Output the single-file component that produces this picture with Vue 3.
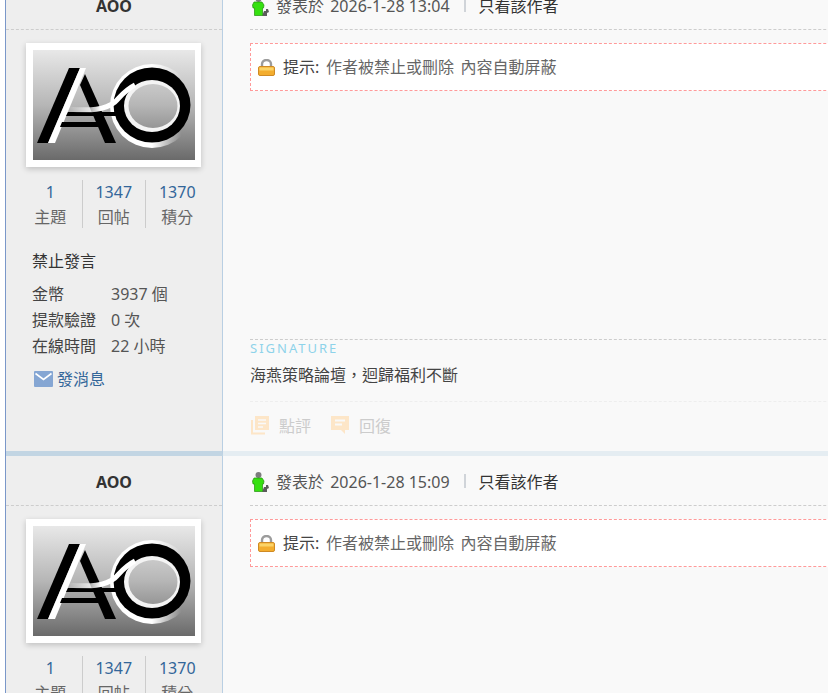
<script setup>
const posts = [
  { time: '2026-1-28 13:04', full: true },
  { time: '2026-1-28 15:09', full: false },
]
const stats = [
  { value: '1', label: '主題' },
  { value: '1347', label: '回帖' },
  { value: '1370', label: '積分' },
]
const details = [
  { label: '金幣', value: '3937 個' },
  { label: '提款驗證', value: '0 次' },
  { label: '在線時間', value: '22 小時' },
]
</script>

<template>
  <div class="page">
    <div class="thread">
      <article v-for="(post, i) in posts" :key="i" class="post">
        <aside class="side">
          <div class="author">AOO</div>
          <div class="avatar">
            <svg class="logo" width="162" height="110" viewBox="0 0 162 110">
              <defs>
                <linearGradient :id="'bg' + i" gradientUnits="userSpaceOnUse" x1="0" y1="0" x2="0" y2="110">
                  <stop offset="0" stop-color="#e8e8e8" />
                  <stop offset="0.5" stop-color="#b6b6b6" />
                  <stop offset="1" stop-color="#6a6a6a" />
                </linearGradient>
                <linearGradient :id="'halo' + i" x1="0" y1="0" x2="1" y2="0">
                  <stop offset="0" stop-color="#fff" />
                  <stop offset="0.5" stop-color="#fff" />
                  <stop offset="0.85" stop-color="#fff" stop-opacity="0" />
                </linearGradient>
                <linearGradient :id="'swoosh' + i" gradientUnits="userSpaceOnUse" x1="34" y1="0" x2="68" y2="0">
                  <stop offset="0" stop-color="#fff" stop-opacity="0" />
                  <stop offset="1" stop-color="#fff" />
                </linearGradient>
              </defs>
              <rect width="162" height="110" :fill="'url(#bg' + i + ')'" />
              <ellipse cx="119" cy="56" rx="42" ry="42" :fill="'url(#halo' + i + ')'" />
              <ellipse cx="119" cy="55" rx="38.500" ry="37.500" fill="#000" />
              <ellipse cx="119" cy="56" rx="28" ry="26" fill="#f4f4f4" />
              <ellipse cx="120" cy="56" rx="24.500" ry="22" :fill="'url(#bg' + i + ')'" />
              <path d="M4 93 L36 18 L47 18 L15 93 Z" fill="#000" />
              <path d="M15 93 L47 18 L53 18 L22 93 Z" fill="#fff" />
              <path d="M52 24 L83 93 L72 93 L47 35 Z" fill="#000" />
              <path d="M35 62 L88 62 L88 66 L33 66 Z" fill="#000" />
              <path d="M29 72 L70 72 L74 77 L27 77 Z" fill="#000" />
              <path d="M34 59 C58 61 72 60 82 52 C88 46 92 40 102 35" fill="none" :stroke="'url(#swoosh' + i + ')'" stroke-width="5" />
            </svg>
          </div>
          <div class="stats">
            <div v-for="s in stats" :key="s.label" class="stat">
              <span class="stat-value">{{ s.value }}</span>
              <span class="stat-label">{{ s.label }}</span>
            </div>
          </div>
          <div class="group">禁止發言</div>
          <dl class="details">
            <div v-for="d in details" :key="d.label" class="detail">
              <dt>{{ d.label }}</dt>
              <dd>{{ d.value }}</dd>
            </div>
          </dl>
          <div class="message">
            <svg width="19" height="16" viewBox="0 0 19 16">
              <rect width="19" height="16" rx="1" fill="#85a6d3" />
              <path d="M1.500 2.500 L9.500 8.500 L17.500 2.500" fill="none" stroke="#fff" stroke-width="1.600" />
            </svg>
            <span>發消息</span>
          </div>
        </aside>

        <section class="main">
          <header class="meta">
            <svg class="online" width="17" height="21" viewBox="0 0 17 21">
              <path d="M10 20 L12 15 L14 15 L14 13 L16 13 L17 16 L15 17 L15 20 Z" fill="#5c5c5c" />
              <circle cx="6.500" cy="3" r="3" fill="#7d7d7d" />
              <path d="M2 6 H10 L12 9 L11.500 12 L10.500 12 L10.500 19.500 H2.500 L2.500 12 L1 12 L0.500 9 Z" fill="#35e010" stroke="#23900c" stroke-width="0.700" />
            </svg>
            <span class="time"><span class="posted">發表於</span> {{ post.time }}</span>
            <i class="pipe"></i>
            <span class="only">只看該作者</span>
          </header>
          <div class="notice">
            <svg width="17" height="17" viewBox="0 0 17 17">
              <path d="M4 8 V5 a4.500 4 0 0 1 9 0 V8" fill="none" stroke="#9c9c9c" stroke-width="2.400" />
              <rect x="0.500" y="7.500" width="16" height="9" rx="1.500" fill="#f3ad2e" stroke="#cf8a24" />
              <rect x="1.500" y="8.500" width="14" height="3" fill="#fbd468" />
            </svg>
            <span class="notice-text"><b>提示:</b> 作者被禁止或刪除 內容自動屏蔽</span>
          </div>
          <template v-if="post.full">
            <div class="signature">
              <div class="sig-title">SIGNATURE</div>
              <div class="sig-text">海燕策略論壇，迴歸福利不斷</div>
            </div>
            <footer class="actions">
              <span class="action">
                <svg width="20" height="20" viewBox="0 0 20 20">
                  <path d="M5 1 H19 V15 H5 Z" fill="#fde6c8" />
                  <path d="M8 5 H16 M8 8.500 H16 M8 12 H13" fill="none" stroke="#f9f9f9" stroke-width="1.600" />
                  <path d="M2 5 V18.500 H15" fill="none" stroke="#fde6c8" stroke-width="2" />
                </svg>
                點評
              </span>
              <span class="action">
                <svg width="20" height="20" viewBox="0 0 20 20">
                  <path d="M1 1 H19 V15 H15 V19 L11 15 H1 Z" fill="#fde6c8" />
                  <path d="M5 5.500 H15 M5 9.500 H12" stroke="#f9f9f9" stroke-width="2" />
                </svg>
                回復
              </span>
            </footer>
          </template>
        </section>
      </article>
    </div>
  </div>
</template>

<style scoped>
.page {
  width: 828px;
  height: 693px;
  overflow: hidden;
  background: #fff;
  font-family: "Noto Sans", "Noto Sans CJK TC", sans-serif;
  font-size: 16px;
  color: #444;
}
.thread {
  margin: -20px 0 0 5px;
  width: 900px;
  border-left: 1px solid #7a97c9;
}
.post {
  display: grid;
  grid-template-columns: 217px 1fr;
  height: 476px;
  background: #f9f9f9;
}
.side {
  background: #eee;
  border-right: 1px solid #b9cfe3;
  border-bottom: 5px solid #c2d5e3;
  display: flex;
  flex-direction: column;
}
.author {
  height: 49px;
  line-height: 52px;
  text-align: center;
  font-weight: 700;
  color: #333;
  border-bottom: 1px dashed #cdcdcd;
}
.avatar {
  align-self: flex-start;
  margin: 13px 0 0 20px;
  padding: 7px 6px 7px 7px;
  background: #fff;
  box-shadow: 0 2px 6px rgba(0, 0, 0, 0.2);
  display: flex;
}
.logo {
  filter: blur(0.5px);
}
.stats {
  display: flex;
  margin: 13px 0 0 13px;
}
.stat {
  width: 62.5px;
  height: 48px;
  display: flex;
  flex-direction: column;
  align-items: center;
  border-right: 1px solid #ccc;
  line-height: 25px;
}
.stat:last-child {
  border-right: 0;
}
.stat-value {
  color: #369;
}
.stat-label {
  color: #666;
}
.group {
  margin: 20px 0 0 26px;
  line-height: 26px;
  color: #333;
}
.details {
  margin: 7px 0 0 26px;
}
.detail {
  display: flex;
  line-height: 26px;
}
.detail dt {
  width: 79px;
  color: #444;
}
.detail dd {
  margin: 0;
  color: #555;
}
.message {
  display: flex;
  align-items: center;
  gap: 4px;
  margin: 7px 0 0 28px;
  line-height: 26px;
  color: #369;
}
.main {
  border-bottom: 5px solid #e5edf2;
  padding-left: 27px;
  display: flex;
  flex-direction: column;
}
.meta {
  height: 49px;
  border-bottom: 1px dashed #cdcdcd;
  display: flex;
  align-items: center;
  padding-top: 3px;
  margin-top: -3px;
}
.online {
  margin: 3px 7px 0 2px;
}
.time {
  color: #555;
}
.posted {
  margin-right: 2px;
}
.pipe {
  width: 2px;
  height: 14px;
  background: #d0d4d9;
  margin: 0 13px 0 14px;
}
.only {
  color: #333;
}
.notice {
  margin-top: 13px;
  height: 46px;
  display: flex;
  align-items: center;
  gap: 8px;
  padding-left: 7px;
  background: #fff;
  border: 1px dashed #ff9a9a;
  color: #666;
}
.notice-text {
  margin-top: -2px;
  word-spacing: 2.5px;
}
.notice b {
  font-weight: 400;
  color: #444;
}
.signature {
  margin-top: auto;
  border-top: 1px dashed #cdcdcd;
}
.sig-title {
  font-size: 13px;
  letter-spacing: 2px;
  line-height: 16px;
  color: #8ed3ea;
}
.sig-text {
  margin-top: 6px;
  line-height: 27px;
  padding-bottom: 12px;
  border-bottom: 1px dashed #eee;
}
.actions {
  display: flex;
  gap: 19px;
  height: 45px;
  padding-bottom: 4px;
  align-items: center;
  color: #ccc;
}
.action {
  display: flex;
  align-items: center;
  gap: 9px;
}
</style>

<style>
html, body {
  margin: 0;
  overflow: hidden;
}
</style>
